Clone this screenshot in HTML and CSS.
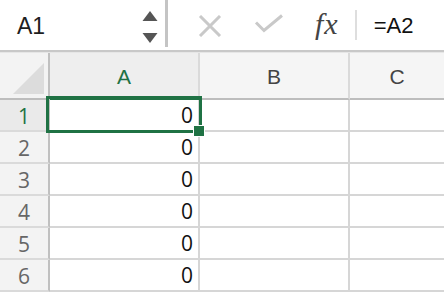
FILE: index.html
```html
<!DOCTYPE html>
<html>
<head>
<meta charset="utf-8">
<link rel="stylesheet" href="styles.css">
</head>
<body>
<div class="app">
  <div class="toolbar">
    <div class="namebox">
      <span class="name">A1</span>
      <span class="spin">
        <svg width="16" height="33" viewBox="0 0 16 33"><polygon points="8,0 15.5,10 0.5,10" fill="#555"/><polygon points="0.5,22 15.5,22 8,32" fill="#555"/></svg>
      </span>
    </div>
    <div class="sep"></div>
    <div class="tools">
      <svg class="ico x" width="24" height="22" viewBox="0 0 24 22"><path d="M2 1 L22 21 M22 1 L2 21" stroke="#c9c9c9" stroke-width="3" fill="none"/></svg>
      <svg class="ico ok" width="30" height="20" viewBox="0 0 30 20"><path d="M2 8.5 L10 16.5 L28 1.5" stroke="#c9c9c9" stroke-width="3" fill="none"/></svg>
      <span class="fx">fx</span>
      <div class="minisep"></div>
      <span class="formula">=A2</span>
    </div>
  </div>
  <div class="gap"></div>
  <div class="grid">
    <div class="corner"><svg width="31" height="31" viewBox="0 0 31 31"><polygon points="31,0 31,31 0,31" fill="#dcdcdc"/></svg></div>
    <div class="colh active">A</div>
    <div class="colh">B</div>
    <div class="colh last">C</div>

    <div class="rowh active">1</div>
    <div class="cell sel">0<div class="selbox"></div><div class="handle"></div></div>
    <div class="cell"></div>
    <div class="cell last"></div>

    <div class="rowh">2</div>
    <div class="cell">0</div>
    <div class="cell"></div>
    <div class="cell last"></div>

    <div class="rowh">3</div>
    <div class="cell">0</div>
    <div class="cell"></div>
    <div class="cell last"></div>

    <div class="rowh">4</div>
    <div class="cell">0</div>
    <div class="cell"></div>
    <div class="cell last"></div>

    <div class="rowh">5</div>
    <div class="cell">0</div>
    <div class="cell"></div>
    <div class="cell last"></div>

    <div class="rowh">6</div>
    <div class="cell">0</div>
    <div class="cell"></div>
    <div class="cell last"></div>
  </div>
</div>
</body>
</html>
```
FILE: styles.css
```css
html, body {
  margin: 0;
  padding: 0;
  background: #ffffff;
  overflow: hidden;
}
.app {
  width: 444px;
  height: 292px;
  font-family: "Liberation Sans", Arial, sans-serif;
}
.toolbar {
  height: 50px;
  display: flex;
  align-items: stretch;
  background: #ffffff;
  border-bottom: 2px solid #c8c8c8;
}
.namebox {
  width: 165px;
  display: flex;
  align-items: center;
  justify-content: space-between;
  padding-left: 17px;
  padding-right: 7px;
  box-sizing: border-box;
}
.name {
  font-size: 23px;
  color: #1e1e1e;
  margin-top: 2px;
}
.spin {
  display: flex;
  margin-top: 4px;
}
.sep {
  width: 3px;
  background: #c4c4c4;
  margin-bottom: 3px;
}
.tools {
  flex: 1;
  display: flex;
  align-items: center;
  padding-left: 30px;
}
.ico.x {
  margin-top: 1px;
}
.ico.ok {
  margin-left: 32px;
  margin-top: -3px;
}
.fx {
  font-family: "Liberation Serif", "DejaVu Serif", serif;
  font-style: italic;
  font-size: 30px;
  color: #444444;
  margin-left: 31px;
  margin-top: -3px;
  letter-spacing: 1px;
}
.minisep {
  width: 2px;
  height: 30px;
  background: #dedede;
  margin-left: 16px;
}
.formula {
  font-size: 22px;
  color: #111111;
  margin-left: 17px;
  margin-top: 1px;
}
.gap {
  height: 1px;
  background: #e6e6e6;
}
.grid {
  display: grid;
  grid-template-columns: 50px 150px 150px 94px;
  grid-template-rows: 47px repeat(6, 32px);
}
.corner {
  background: #f3f3f3;
  border-right: 2px solid #c0c0c0;
  border-bottom: 2px solid #bdbdbd;
  display: flex;
  align-items: flex-end;
  justify-content: flex-end;
  padding: 0 4px 4px 0;
}
.colh {
  background: #f5f5f5;
  border-right: 2px solid #dadada;
  border-bottom: 2px solid #bdbdbd;
  display: flex;
  align-items: center;
  justify-content: center;
  font-size: 21px;
  color: #444444;
  padding-top: 2px;
}
.colh.active {
  color: #1f7244;
  background: #eeeeee;
  border-bottom-color: #1f7244;
  box-shadow: inset 0 -2px 0 #1f7244;
}
.colh.last, .cell.last {
  border-right: none;
}
.rowh {
  background: #f3f3f3;
  border-right: 2px solid #c0c0c0;
  border-bottom: 2px solid #dadada;
  display: flex;
  align-items: center;
  justify-content: center;
  font-family: "Open Sans", "Liberation Sans", sans-serif;
  font-size: 21px;
  color: #666666;
  padding-top: 1px;
}
.rowh.active {
  color: #1f7244;
  background: #eaeaea;
}
.cell {
  position: relative;
  border-right: 2px solid #d6d6d6;
  border-bottom: 2px solid #d6d6d6;
  display: flex;
  align-items: center;
  justify-content: flex-end;
  padding-right: 5px;
  font-family: "Open Sans", "Liberation Sans", sans-serif;
  font-size: 21px;
  color: #111111;
}
.selbox {
  position: absolute;
  z-index: 2;
  left: -4px;
  top: -4px;
  width: 150px;
  height: 31px;
  border: 3px solid #1f7244;
}
.handle {
  position: absolute;
  z-index: 3;
  left: 143px;
  top: 25px;
  width: 10px;
  height: 10px;
  background: #1f7244;
  border: 1px solid #ffffff;
}
```
